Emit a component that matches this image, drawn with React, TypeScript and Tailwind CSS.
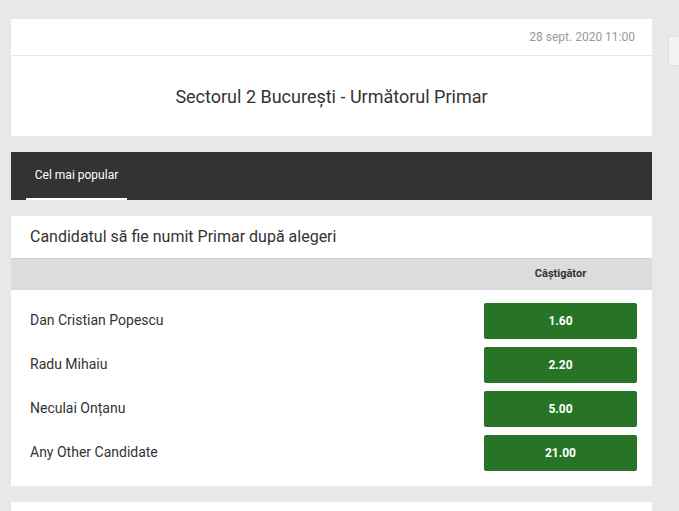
import type { FC } from "react";

const candidates = [
	{ name: "Dan Cristian Popescu", odds: "1.60" },
	{ name: "Radu Mihaiu", odds: "2.20" },
	{ name: "Neculai Onțanu", odds: "5.00" },
	{ name: "Any Other Candidate", odds: "21.00" },
];

const OddsRow: FC<{ name: string; odds: string }> = ({ name, odds }) => (
	<div className="flex h-11 items-center justify-between pl-[19px] pr-[15px]">
		<div className="-mt-[2px] text-[14px] text-[#333]">{name}</div>
		<button
			type="button"
			className="h-9 w-[153px] rounded-[2px] bg-[#277427] text-[12px] font-bold text-white"
		>
			{odds}
		</button>
	</div>
);

export default function App() {
	return (
		<div
			className="flex h-[511px] gap-4 overflow-hidden bg-[#e8e8e8] pl-[11px] pt-[19px]"
			style={{ fontFamily: "Roboto, 'Liberation Sans', sans-serif" }}
		>
			<div className="flex w-[641px] shrink-0 flex-col gap-4">
				<div className="shrink-0 bg-white">
					<div className="flex h-[37px] items-center justify-end border-b border-[#e6e6e6] pr-[17px] text-[12px] text-[#999]">
						28 sept. 2020 11:00
					</div>
					<div className="flex h-[80px] items-center justify-center text-[18px] text-[#333]">
						Sectorul 2 București - Următorul Primar
					</div>
				</div>

				<div className="flex h-12 shrink-0 bg-[#333] pl-[15px]">
					<div className="flex w-[101px] flex-col">
						<div className="flex grow items-center justify-center text-[12px] text-white">
							Cel mai popular
						</div>
						<div className="h-[2px] bg-white" />
					</div>
				</div>

				<div className="shrink-0 bg-white">
					<div className="flex h-[42px] items-center pl-[19px] text-[16px] text-[#333]">
						Candidatul să fie numit Primar după alegeri
					</div>
					<div className="flex h-[32px] items-center justify-end border-t border-[#d0d0d0] bg-[#dcdcdc] pr-[15px]">
						<div className="w-[153px] text-center text-[11px] font-bold text-[#333]">
							Câștigător
						</div>
					</div>
					<div className="pb-[11px] pt-[9px]">
						{candidates.map((c) => (
							<OddsRow key={c.name} name={c.name} odds={c.odds} />
						))}
					</div>
				</div>

				<div className="h-12 shrink-0 bg-white" />
			</div>

			<div className="mt-[17px] h-[30px] w-20 shrink-0 border border-[#e0e0e0] bg-[#f3f3f3]" />
		</div>
	);
}
